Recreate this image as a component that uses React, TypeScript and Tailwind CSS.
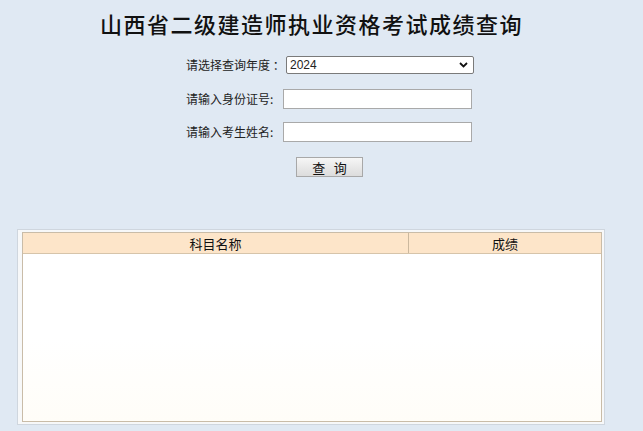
import React from 'react';

const cjk = { fontFamily: '"Noto Sans CJK SC", "Liberation Sans", sans-serif' };

const App: React.FC = () => {
  return (
    <div className="w-[643px] h-[431px] bg-[#e0e9f3] overflow-hidden text-[#222]" style={cjk}>
      {/* Title */}
      <h1 className="pt-[9px] pr-[20px] h-[40px] text-center text-[22px] leading-[28px] font-medium tracking-[1.5px] text-[#111]">
        山西省二级建造师执业资格考试成绩查询
      </h1>

      {/* Query form */}
      <div className="ml-[186px] mt-[16px] w-[300px] flex flex-col text-[12px]">
        <div className="flex items-center h-[18px]">
          <span className="w-[100px] leading-[18px]">请选择查询年度 ：</span>
          <div className="w-[188px] h-[18px] bg-white border border-[#7a7a7a] rounded-[2px] flex items-center justify-between pl-[3px] pr-[5px]">
            <span className="text-[12px] leading-none" style={{ fontFamily: '"Liberation Sans", sans-serif' }}>2024</span>
            <svg width="9" height="6" viewBox="0 0 9 6">
              <path d="M1 1 L4.5 4.5 L8 1" fill="none" stroke="#111" strokeWidth="1.8" />
            </svg>
          </div>
        </div>
        <div className="flex items-center h-[20px] mt-[15px]">
          <span className="w-[97px] leading-[20px]">请输入身份证号:</span>
          <input className="w-[189px] h-[20px] bg-white border border-[#a9a9a9] outline-none" />
        </div>
        <div className="flex items-center h-[20px] mt-[13px]">
          <span className="w-[97px] leading-[20px]">请输入考生姓名:</span>
          <input className="w-[189px] h-[20px] bg-white border border-[#a9a9a9] outline-none" />
        </div>
        <div className="mt-[15px] ml-[110px]">
          <button className="w-[67px] h-[20px] border border-[#a8a8a8] bg-gradient-to-b from-[#f6f6f6] to-[#dcdcdc] text-[13px] leading-none text-[#111]">
            查&nbsp;&nbsp;&nbsp;询
          </button>
        </div>
      </div>

      {/* Result table */}
      <div className="ml-[17px] mt-[52px] w-[588px] h-[196px] border border-[#cfd6de] bg-[#f7f8f9] pt-[2px] pl-[4px]">
        <div className="w-[580px] h-[190px] border border-[#c9bca8] bg-white flex flex-col">
          <div className="flex h-[21px] bg-[#fde5c9] border-b border-[#d6c4aa] text-[13px] leading-[21px] text-[#111]">
            <div className="w-[386px] text-center border-r border-[#cbb89e]">科目名称</div>
            <div className="flex-1 text-center">成绩</div>
          </div>
          <div className="flex-1 bg-gradient-to-b from-white via-white to-[#fffdf8]" />
        </div>
      </div>
    </div>
  );
};

export default App;
